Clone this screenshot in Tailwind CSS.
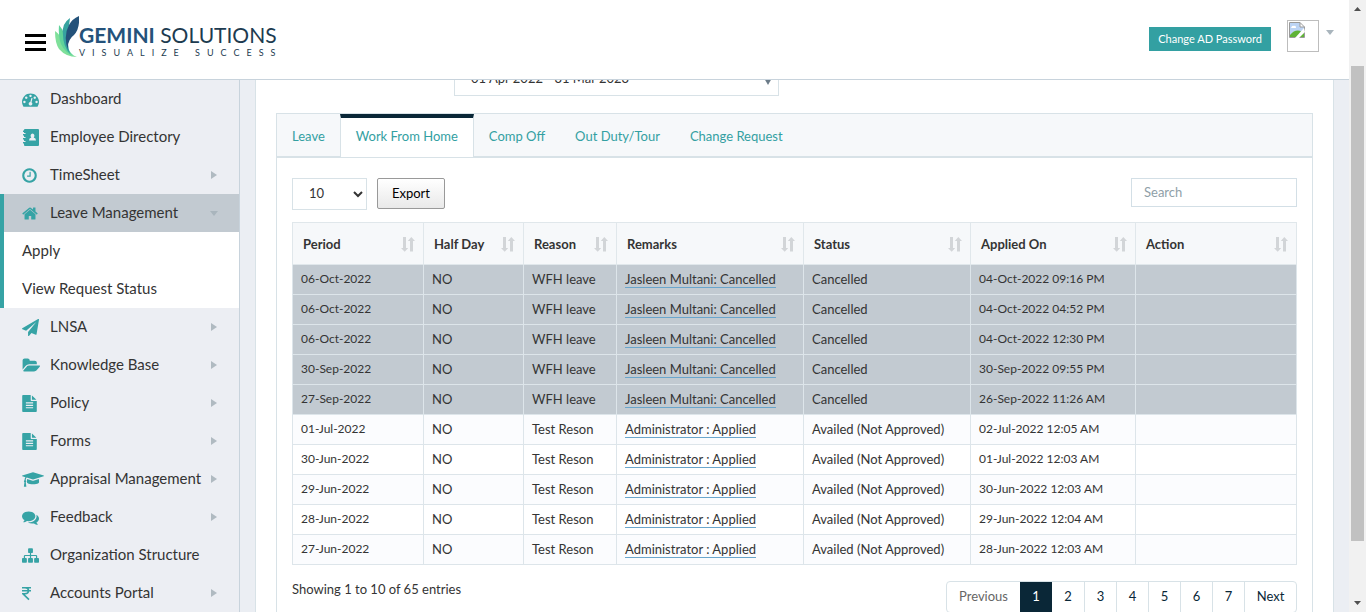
<!DOCTYPE html>
<html lang="en">
<head>
<meta charset="utf-8">
<title>Gemini Solutions - View Request Status</title>
<script src="https://cdn.jsdelivr.net/npm/@tailwindcss/browser@4"></script>
</head>
<body class="flex h-screen overflow-hidden bg-white font-['Lato','Open_Sans',sans-serif] text-[13px] text-[#343434]">
<svg class="hidden">
  <symbol id="dash" viewBox="0 0 1792 1792"><path d="M384 1152q0-53-37.500-90.500t-90.500-37.500-90.500 37.500-37.500 90.500 37.500 90.500 90.500 37.500 90.500-37.500 37.500-90.500zm192-448q0-53-37.500-90.500t-90.500-37.500-90.500 37.500-37.500 90.500 37.500 90.500 90.500 37.500 90.500-37.500 37.500-90.500zm428 481l101-382q6-26-7.500-48.500t-38.500-29.500-48 6.500-30 39.500l-101 382q-60 5-107 43.500t-63 98.500q-20 77 20 146t117 89 146-20 89-117q16-60-6-117t-72-91zm660-33q0-53-37.500-90.500t-90.500-37.500-90.500 37.500-37.500 90.500 37.500 90.500 90.500 37.500 90.500-37.500 37.500-90.500zm-640-640q0-53-37.500-90.500t-90.500-37.500-90.500 37.500-37.500 90.500 37.500 90.500 90.500 37.500 90.500-37.500 37.500-90.500zm448 192q0-53-37.500-90.500t-90.500-37.500-90.500 37.500-37.500 90.500 37.500 90.500 90.500 37.500 90.500-37.500 37.500-90.500zm320 448q0 261-141 483-19 29-54 29h-1402q-35 0-54-29-141-221-141-483 0-182 71-348t191-286 286-191 348-71 348 71 286 191 191 286 71 348z"/></symbol>
  <symbol id="book" viewBox="0 0 17 17"><path fill-rule="evenodd" d="M3 0H16Q17 0 17 1V16Q17 17 16 17H3Q2 17 2 16V14.500H1V13H3.500V12H2V10.500H1V9H3.500V8H2V6.500H1V5H3.500V4H2V3H1V1.500H2V1Q2 0 3 0ZM10.500 4.500A2 2.200 0 0 0 9.300 8.400Q7 9 7 11.500H14Q14 9 11.700 8.400A2 2.200 0 0 0 10.500 4.500Z"/></symbol>
  <symbol id="clock" viewBox="128 0 1536 1792"><path d="M1024 544v448q0 14-9 23t-23 9h-320q-14 0-23-9t-9-23v-64q0-14 9-23t23-9h224v-352q0-14 9-23t23-9h64q14 0 23 9t9 23zm416 352q0-148-73-273t-198-198-273-73-273 73-198 198-73 273 73 273 198 198 273 73 273-73 198-198 73-273zm224 0q0 209-103 385.500t-279.500 279.500-385.500 103-385.500-103-279.500-279.500-103-385.500 103-385.500 279.500-279.500 385.500-103 385.500 103 279.500 279.500 103 385.500z"/></symbol>
  <symbol id="home" viewBox="64 0 1664 1792"><path d="M1472 992v480q0 26-19 45t-45 19h-384v-384h-256v384h-384q-26 0-45-19t-19-45v-480q0-1 .5-3t.5-3l575-474 575 474q1 2 1 6zm223-69l-62 74q-8 9-21 11h-3q-13 0-21-7l-692-577-692 577q-12 8-24 7-13-2-21-11l-62-74q-8-10-7-23.500t11-21.500l719-599q32-26 76-26t76 26l244 204v-195q0-14 9-23t23-9h192q14 0 23 9t9 23v408l219 182q10 8 11 21.500t-7 23.500z"/></symbol>
  <symbol id="plane" viewBox="0 0 1792 1792"><path d="M1764 11q33 24 27 64l-256 1536q-5 29-32 45-14 8-31 8-11 0-24-5l-453-185-242 295q-18 23-49 23-13 0-22-4-19-7-30.500-23.500t-11.500-36.500v-349l864-1059-1069 925-395-162q-37-14-40-55-2-40 32-59l1664-960q15-9 32-9 20 0 36 11z"/></symbol>
  <symbol id="folder" viewBox="0 0 1943 1792"><path d="M1943 952q0 31-31 66l-336 396q-43 51-120.500 86.500t-143.500 35.500h-1088q-34 0-60.500-13t-26.500-43q0-31 31-66l336-396q43-51 120.500-86.500t143.500-35.500h1088q34 0 60.500 13t26.500 43zm-343-344v160h-832q-94 0-197 47.500t-164 119.500l-337 396-5 6q0-4-.5-12.500t-.5-12.500v-960q0-92 66-158t158-66h320q92 0 158 66t66 158v32h544q92 0 158 66t66 158z"/></symbol>
  <symbol id="file" viewBox="128 0 1536 1792"><path d="M1596 476q14 14 28 36h-472v-472q22 14 36 28zm-476 164h544v1056q0 40-28 68t-68 28h-1344q-40 0-68-28t-28-68v-1600q0-40 28-68t68-28h800v544q0 40 28 68t68 28zm160 736v-64q0-14-9-23t-23-9h-704q-14 0-23 9t-9 23v64q0 14 9 23t23 9h704q14 0 23-9t9-23zm0-256v-64q0-14-9-23t-23-9h-704q-14 0-23 9t-9 23v64q0 14 9 23t23 9h704q14 0 23-9t9-23zm0-256v-64q0-14-9-23t-23-9h-704q-14 0-23 9t-9 23v64q0 14 9 23t23 9h704q14 0 23-9t9-23z"/></symbol>
  <symbol id="cap" viewBox="0 0 2304 1792"><path d="M1774 836l18 316q4 69-82 128t-235 93.500-323 34.500-323-34.500-235-93.500-82-128l18-316 574 181q22 7 48 7t48-7zm530-324q0 23-22 31l-1120 352q-4 1-10 1t-10-1l-652-206q-43 34-71 111.500t-34 178.500q63 36 63 109 0 69-58 107l58 433q2 14-8 25-9 11-24 11h-192q-15 0-24-11-10-11-8-25l58-433q-58-38-58-107 0-73 65-111 11-207 98-330l-333-104q-22-8-22-31t22-31l1120-352q4-1 10-1t10 1l1120 352q22 8 22 31z"/></symbol>
  <symbol id="chat" viewBox="0 0 1792 1792"><path d="M1408 768q0 139-94 257t-256.500 186.500-353.500 68.500q-86 0-176-16-124 88-278 128-36 9-86 16h-3q-11 0-20.500-8t-11.500-21q-1-3-1-6.500t.5-6.500 2-6l2.500-5 3.500-5.500 4-5 4.500-5 4-4.500q5-6 23-25t26-29.500 22.500-29 25-38.500 20.500-44q-124-72-195-177t-71-224q0-139 94-257t256.500-186.500 353.500-68.500 353.500 68.500 256.500 186.500 94 257zm384 256q0 120-71 224.500t-195 176.500q10 24 20.500 44t25 38.500 22.500 29 26 29.500 23 25q1 1 4 4.500t4.500 5 4 5 3.500 5.500l2.500 5 2 6 .5 6.500-1 6.500q-3 14-13 22t-22 7q-50-7-86-16-154-40-278-128-90 16-176 16-271 0-472-132 58 4 88 4 161 0 309-45t264-129q125-92 192-212t67-254q0-77-23-152 129 71 204 178t75 230z"/></symbol>
  <symbol id="tree" viewBox="0 0 1792 1792"><path d="M1792 1248v320q0 40-28 68t-68 28h-320q-40 0-68-28t-28-68v-320q0-40 28-68t68-28h96v-192h-512v192h96q40 0 68 28t28 68v320q0 40-28 68t-68 28h-320q-40 0-68-28t-28-68v-320q0-40 28-68t68-28h96v-192h-512v192h96q40 0 68 28t28 68v320q0 40-28 68t-68 28h-320q-40 0-68-28t-28-68v-320q0-40 28-68t68-28h96v-192q0-52 38-90t90-38h512v-192h-96q-40 0-68-28t-28-68v-320q0-40 28-68t68-28h320q40 0 68 28t28 68v320q0 40-28 68t-68 28h-96v192h512q52 0 90 38t38 90v192h96q40 0 68 28t28 68z"/></symbol>
  <symbol id="rupee" viewBox="0 0 10 17"><path d="M0 2.800H9M0 5.800H9M0 2.800H3Q6.500 2.800 6.500 5.700T3 8.800H1L7 14.600" fill="none" stroke="currentColor" stroke-width="1.600"/></symbol>
  <symbol id="sort" viewBox="0 0 14 15"><path d="M2 0H5V11H7.200L3.700 14.800L0 11H2ZM9 14.500H12V4H14L10.300 0L6.800 4H9Z"/></symbol>
</svg>

<div class="flex min-w-0 flex-1 flex-col">
  <header class="relative z-10 flex h-20 shrink-0 items-start border-b border-[#c8d3dc] bg-white">
    <button aria-label="Toggle menu" class="mt-[34px] ml-[25px] flex w-[21px] flex-col gap-1">
      <span class="h-[3px] w-full bg-black"></span><span class="h-[3px] w-full bg-black"></span><span class="h-[3px] w-full bg-black"></span>
    </button>
    <a href="#" aria-label="Gemini Solutions" class="mt-4 ml-[9px] flex">
      <svg class="h-[41px] w-6" viewBox="0 0 24 41">
        <path fill="#7fe09a" d="M0 15Q6 19 8 27Q11 37 22 41Q11 41 4 33Q0 27 0 15Z"/>
        <path fill="#5fd39a" d="M4 9Q10 16 10 24Q12 34 19 40Q10 37 6 28Q3 20 4 9Z"/>
        <path fill="#36a3a0" d="M15 2Q6 8 8 19Q8 30 15 38Q12 28 13 17Q14 10 15 2Z"/>
        <path fill="#24527a" d="M24 0Q25 13 19 19Q12 24 13 34Q8 20 14 9Q17 3 24 0Z"/>
      </svg>
      <span class="mt-[6px] block whitespace-nowrap">
        <span class="block text-[21px] leading-[26px] text-[#1d3b50]"><b class="font-bold text-[#24527a]">GEMINI</b> SOLUTIONS</span>
        <span class="block text-[9px] leading-[10px] tracking-[7px] text-[#1d3b50]">VISUALIZE SUCCESS</span>
      </span>
    </a>
    <button class="mt-[27px] ml-auto h-6 bg-[#33a0a2] px-[9px] text-[11px] text-white">Change AD Password</button>
    <button aria-label="Profile" class="mt-5 mr-[15px] ml-4 flex items-start">
      <svg class="size-8" viewBox="0 0 32 32"><rect x=".5" y=".5" width="31" height="31" fill="#fff" stroke="#bdbdbd"/><path d="M2.500 2.500H13L17.500 7V17.500H2.500Z" fill="#fff" stroke="#9a9a9a"/><path d="M3 3H13V7H17V12Q11 15 3 15Z" fill="#bcd4f5"/><path d="M4 8Q5 5 7 6Q9 5 9 8Z" fill="#fff"/><path d="M3 15Q9 8 15 12L10 17H3Z" fill="#5fb336"/><path d="M17 8L8 18H12L18 12Z" fill="#fff"/><path d="M13 17L17 13V17Z" fill="#5fb336"/><path d="M13 2.500V7H17.500" fill="none" stroke="#9a9a9a"/></svg>
      <svg class="mt-[10px] ml-[7px] h-[5px] w-2" viewBox="0 0 8 5"><path d="M0 0H8L4 5Z" fill="#a9b5bd"/></svg>
    </button>
  </header>

  <div class="flex min-h-0 flex-1 overflow-hidden bg-[#ebeef3]">
    <nav aria-label="Main" id="side" class="w-60 shrink-0 border-r border-[#c8d3dc] bg-[#eceef3] text-[15px]"></nav>

    <main class="mr-[15px] ml-[15px] min-w-0 flex-1">
      <div class="-mt-[18px] min-h-screen border-x border-[#d8e2e7] bg-white px-5">
        <div class="flex pl-[178px]">
          <div class="relative w-[325px]">
            <select aria-label="Period" class="h-[34px] w-full appearance-none border border-[#d8e2e7] bg-white px-4"><option>01 Apr 2022 - 31 Mar 2023</option></select>
            <svg class="pointer-events-none absolute top-4 right-[7px] h-[7px] w-2" viewBox="0 0 8 7"><path d="M0 0H8L4 7Z" fill="#6b7b88"/></svg>
          </div>
        </div>

        <div role="tablist" class="mt-[17px] flex h-11 border border-[#d8e2e7] bg-[#f6f8fa] text-[#33a0a2]">
          <button role="tab" class="px-[15px] pt-1">Leave</button>
          <button role="tab" aria-selected="true" class="-mb-px border-x border-t-4 border-x-[#d8e2e7] border-t-[#0a2737] bg-white px-[15px] pb-[2px]">Work From Home</button>
          <button role="tab" class="px-[15px] pt-1">Comp Off</button>
          <button role="tab" class="px-[15px] pt-1">Out Duty/Tour</button>
          <button role="tab" class="px-[15px] pt-1">Change Request</button>
        </div>

        <div class="border border-[#d8e2e7] px-[15px] pt-5 pb-8">
          <div class="flex items-start">
            <select aria-label="Rows per page" class="h-8 w-[75px] border border-[#d8e2e7] bg-white pb-[2px] pl-3"><option>10</option></select>
            <button class="ml-[10px] h-[31px] w-[68px] rounded-xs border border-[#999] bg-linear-to-b from-white to-[#e9e9e9] text-black">Export</button>
            <input aria-label="Search" placeholder="Search" class="ml-auto h-[29px] w-[166px] border border-[#d3dfe6] px-3 pb-[2px] placeholder:text-[#8fa0a8]">
          </div>
          <table class="mt-3 w-full table-fixed border-collapse border border-[#e7ecef]">
            <colgroup><col class="w-[131px]"><col class="w-[100px]"><col class="w-[93px]"><col class="w-[187px]"><col class="w-[167px]"><col class="w-[165px]"><col class="w-[161px]"></colgroup>
            <thead><tr id="head" class="h-[42px] bg-[#f6f8fa]"></tr></thead>
            <tbody id="rows"></tbody>
          </table>
          <div class="flex items-start justify-between pt-4">
            <p class="leading-4">Showing 1 to 10 of 65 entries</p>
            <div class="flex h-8 overflow-hidden rounded-[4px] border border-[#d8e2e7] text-[#0a2737]">
              <button class="w-[73px] text-[#666]">Previous</button>
              <button aria-current="page" class="w-8 bg-[#0a2737] text-white">1</button>
              <button class="w-8">2</button>
              <button class="w-8 border-l border-[#d8e2e7]">3</button>
              <button class="w-8 border-l border-[#d8e2e7]">4</button>
              <button class="w-8 border-l border-[#d8e2e7]">5</button>
              <button class="w-8 border-l border-[#d8e2e7]">6</button>
              <button class="w-8 border-l border-[#d8e2e7]">7</button>
              <button class="w-[52px] border-l border-[#d8e2e7]">Next</button>
            </div>
          </div>
        </div>
      </div>
    </main>
  </div>
</div>

<div aria-hidden="true" class="flex w-[17px] shrink-0 flex-col items-center bg-[#f1f1f1]">
  <svg class="mt-[7px] h-1 w-[7px] shrink-0" viewBox="0 0 7 4"><path d="M0 4H7L3.500 0Z" fill="#505050"/></svg>
  <div class="mt-[55px] h-[475px] w-[13px] shrink-0 bg-[#c1c1c1]"></div>
  <svg class="mt-auto mb-[7px] h-1 w-[7px] shrink-0" viewBox="0 0 7 4"><path d="M0 0H7L3.500 4Z" fill="#505050"/></svg>
</div>

<script>
const menu = [
  ['dash','w-[17px]','Dashboard',0],['book','w-[17px]','Employee Directory',0],['clock','w-[15px]','TimeSheet',1],
  ['home','w-4','Leave Management',2],['plane','w-[17px]','LNSA',1],['folder','w-[18px]','Knowledge Base',1],
  ['file','w-[15px]','Policy',1],['file','w-[15px]','Forms',1],['cap','w-[22px]','Appraisal Management',1],
  ['chat','w-[17px]','Feedback',1],['tree','w-[17px]','Organization Structure',0],['rupee','w-[10px]','Accounts Portal',1]];
const right = '<svg class="ml-auto h-2 w-[6px]" viewBox="0 0 6 8"><path d="M0 0V8L6 4Z" fill="#b0bac1"/></svg>';
const down = '<svg class="ml-auto h-[5px] w-2" viewBox="0 0 8 5"><path d="M0 0H8L4 5Z" fill="#a9b5bd"/></svg>';
document.getElementById('side').innerHTML = menu.map(([icon, w, label, kind]) => {
  const body = `<span class="flex w-7 shrink-0"><svg class="h-[17px] ${w} fill-[#36a3a5] text-[#36a3a5]"><use href="#${icon}"/></svg></span><span class="pb-[2px] whitespace-nowrap">${label}</span>`;
  if (kind === 2) return `<div class="border-l-4 border-[#36a3a5]"><a href="#" class="flex h-[38px] items-center bg-[#c2cad1] pr-[21px] pl-[18px]">${body}${down}</a>
    <a href="#" class="flex h-[38px] items-center bg-white pb-[2px] pl-[18px]">Apply</a><a href="#" class="flex h-[38px] items-center bg-white pb-[2px] pl-[18px]">View Request Status</a></div>`;
  return `<a href="#" class="flex h-[38px] items-center pr-[22px] pl-[22px]">${body}${kind ? right : ''}</a>`;
}).join('');

document.getElementById('head').innerHTML = ['Period','Half Day','Reason','Remarks','Status','Applied On','Action'].map(t =>
  `<th class="border border-[#e0e7eb] pt-[2px] pr-2 pl-[10px] text-left font-bold"><div class="flex items-center justify-between whitespace-nowrap">${t}<svg class="h-[15px] w-[14px] fill-[#d2d5d8]"><use href="#sort"/></svg></div></th>`).join('');

const rows = [
  ['06-Oct-2022','04-Oct-2022 09:16 PM'],['06-Oct-2022','04-Oct-2022 04:52 PM'],['06-Oct-2022','04-Oct-2022 12:30 PM'],
  ['30-Sep-2022','30-Sep-2022 09:55 PM'],['27-Sep-2022','26-Sep-2022 11:26 AM'],['01-Jul-2022','02-Jul-2022 12:05 AM'],
  ['30-Jun-2022','01-Jul-2022 12:03 AM'],['29-Jun-2022','30-Jun-2022 12:03 AM'],['28-Jun-2022','29-Jun-2022 12:04 AM'],
  ['27-Jun-2022','28-Jun-2022 12:03 AM']];
document.getElementById('rows').innerHTML = rows.map(([day, applied], i) => {
  const off = i < 5;
  const bg = off ? 'bg-[#c2cad1]' : i % 2 ? 'bg-[#fbfcfe]' : 'bg-white';
  const remark = `<a href="#" class="inline-block border-b border-[#6aa6cc] leading-4">${off ? 'Jasleen Multani: Cancelled' : 'Administrator : Applied'}</a>`;
  return `<tr class="h-[30px] ${bg}">` + [day, 'NO', off ? 'WFH leave' : 'Test Reson', remark, off ? 'Cancelled' : 'Availed (Not Approved)', applied, '']
    .map((c, n) => `<td class="border border-[#dde5ea] px-2 pb-[2px] leading-[18px] whitespace-nowrap ${n === 0 || n === 5 ? 'text-[12px]' : ''}">${c}</td>`).join('') + '</tr>';
}).join('');
</script>
</body>
</html>
